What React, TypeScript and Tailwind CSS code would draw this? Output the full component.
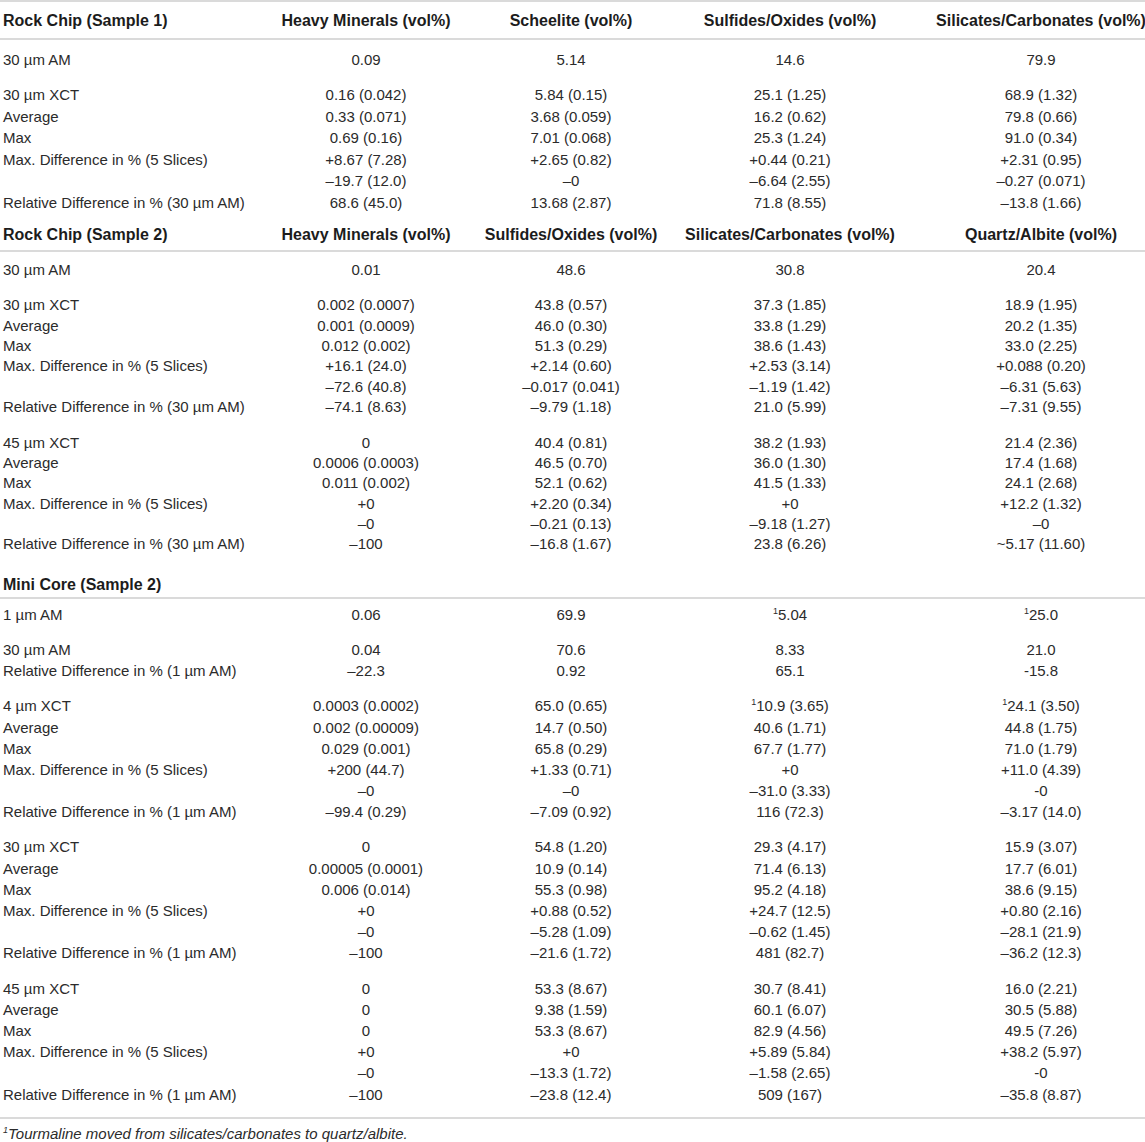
import type { ReactNode } from 'react';

type Row = [ReactNode, ReactNode, ReactNode, ReactNode, ReactNode];

interface Section {
  title: string;
  cols: string[] | null;
  headerClass: string;
  bodyClass: string;
  groupGap: string;
  rowClass: string;
  groups: Row[][];
}

const Sup = ({ children }: { children: ReactNode }) => (
  <span className="align-super text-[9px] leading-none">{children}</span>
);

const sections: Section[] = [
  {
    title: 'Rock Chip (Sample 1)',
    cols: ['Heavy Minerals (vol%)', 'Scheelite (vol%)', 'Sulfides/Oxides (vol%)', 'Silicates/Carbonates (vol%)'],
    headerClass: 'h-[40px] border-t-2 pt-[1px]',
    bodyClass: 'pt-[9px] pb-[6px]',
    groupGap: 'gap-[13.4px]',
    rowClass: 'h-[21.6px]',
    groups: [
      [['30 µm AM', '0.09', '5.14', '14.6', '79.9']],
      [
        ['30 µm XCT', '0.16 (0.042)', '5.84 (0.15)', '25.1 (1.25)', '68.9 (1.32)'],
        ['Average', '0.33 (0.071)', '3.68 (0.059)', '16.2 (0.62)', '79.8 (0.66)'],
        ['Max', '0.69 (0.16)', '7.01 (0.068)', '25.3 (1.24)', '91.0 (0.34)'],
        ['Max. Difference in % (5 Slices)', '+8.67 (7.28)', '+2.65 (0.82)', '+0.44 (0.21)', '+2.31 (0.95)'],
        ['', '–19.7 (12.0)', '–0', '–6.64 (2.55)', '–0.27 (0.071)'],
        ['Relative Difference in % (30 µm AM)', '68.6 (45.0)', '13.68 (2.87)', '71.8 (8.55)', '–13.8 (1.66)'],
      ],
    ],
  },
  {
    title: 'Rock Chip (Sample 2)',
    cols: ['Heavy Minerals (vol%)', 'Sulfides/Oxides (vol%)', 'Silicates/Carbonates (vol%)', 'Quartz/Albite (vol%)'],
    headerClass: 'h-[32px] pt-[1px]',
    bodyClass: 'pt-[7px] pb-[14px]',
    groupGap: 'gap-[15.5px]',
    rowClass: 'h-[20.3px]',
    groups: [
      [['30 µm AM', '0.01', '48.6', '30.8', '20.4']],
      [
        ['30 µm XCT', '0.002 (0.0007)', '43.8 (0.57)', '37.3 (1.85)', '18.9 (1.95)'],
        ['Average', '0.001 (0.0009)', '46.0 (0.30)', '33.8 (1.29)', '20.2 (1.35)'],
        ['Max', '0.012 (0.002)', '51.3 (0.29)', '38.6 (1.43)', '33.0 (2.25)'],
        ['Max. Difference in % (5 Slices)', '+16.1 (24.0)', '+2.14 (0.60)', '+2.53 (3.14)', '+0.088 (0.20)'],
        ['', '–72.6 (40.8)', '–0.017 (0.041)', '–1.19 (1.42)', '–6.31 (5.63)'],
        ['Relative Difference in % (30 µm AM)', '–74.1 (8.63)', '–9.79 (1.18)', '21.0 (5.99)', '–7.31 (9.55)'],
      ],
      [
        ['45 µm XCT', '0', '40.4 (0.81)', '38.2 (1.93)', '21.4 (2.36)'],
        ['Average', '0.0006 (0.0003)', '46.5 (0.70)', '36.0 (1.30)', '17.4 (1.68)'],
        ['Max', '0.011 (0.002)', '52.1 (0.62)', '41.5 (1.33)', '24.1 (2.68)'],
        ['Max. Difference in % (5 Slices)', '+0', '+2.20 (0.34)', '+0', '+12.2 (1.32)'],
        ['', '–0', '–0.21 (0.13)', '–9.18 (1.27)', '–0'],
        ['Relative Difference in % (30 µm AM)', '–100', '–16.8 (1.67)', '23.8 (6.26)', '~5.17 (11.60)'],
      ],
    ],
  },
  {
    title: 'Mini Core (Sample 2)',
    cols: null,
    headerClass: 'h-[32px] pt-[6px]',
    bodyClass: 'pt-[4.4px] pb-[12.4px]',
    groupGap: 'gap-[14px]',
    rowClass: 'h-[21.2px]',
    groups: [
      [['1 µm AM', '0.06', '69.9', <><Sup>1</Sup>5.04</>, <><Sup>1</Sup>25.0</>]],
      [
        ['30 µm AM', '0.04', '70.6', '8.33', '21.0'],
        ['Relative Difference in % (1 µm AM)', '–22.3', '0.92', '65.1', '-15.8'],
      ],
      [
        ['4 µm XCT', '0.0003 (0.0002)', '65.0 (0.65)', <><Sup>1</Sup>10.9 (3.65)</>, <><Sup>1</Sup>24.1 (3.50)</>],
        ['Average', '0.002 (0.00009)', '14.7 (0.50)', '40.6 (1.71)', '44.8 (1.75)'],
        ['Max', '0.029 (0.001)', '65.8 (0.29)', '67.7 (1.77)', '71.0 (1.79)'],
        ['Max. Difference in % (5 Slices)', '+200 (44.7)', '+1.33 (0.71)', '+0', '+11.0 (4.39)'],
        ['', '–0', '–0', '–31.0 (3.33)', '-0'],
        ['Relative Difference in % (1 µm AM)', '–99.4 (0.29)', '–7.09 (0.92)', '116 (72.3)', '–3.17 (14.0)'],
      ],
      [
        ['30 µm XCT', '0', '54.8 (1.20)', '29.3 (4.17)', '15.9 (3.07)'],
        ['Average', '0.00005 (0.0001)', '10.9 (0.14)', '71.4 (6.13)', '17.7 (6.01)'],
        ['Max', '0.006 (0.014)', '55.3 (0.98)', '95.2 (4.18)', '38.6 (9.15)'],
        ['Max. Difference in % (5 Slices)', '+0', '+0.88 (0.52)', '+24.7 (12.5)', '+0.80 (2.16)'],
        ['', '–0', '–5.28 (1.09)', '–0.62 (1.45)', '–28.1 (21.9)'],
        ['Relative Difference in % (1 µm AM)', '–100', '–21.6 (1.72)', '481 (82.7)', '–36.2 (12.3)'],
      ],
      [
        ['45 µm XCT', '0', '53.3 (8.67)', '30.7 (8.41)', '16.0 (2.21)'],
        ['Average', '0', '9.38 (1.59)', '60.1 (6.07)', '30.5 (5.88)'],
        ['Max', '0', '53.3 (8.67)', '82.9 (4.56)', '49.5 (7.26)'],
        ['Max. Difference in % (5 Slices)', '+0', '+0', '+5.89 (5.84)', '+38.2 (5.97)'],
        ['', '–0', '–13.3 (1.72)', '–1.58 (2.65)', '-0'],
        ['Relative Difference in % (1 µm AM)', '–100', '–23.8 (12.4)', '509 (167)', '–35.8 (8.87)'],
      ],
    ],
  },
];

// label column, then four value columns (last one nudged right)
const grid = 'grid grid-cols-[263px_206px_204px_234px_238px]';
const cellAlign = ['pl-[3px] justify-start', 'justify-center', 'justify-center', 'justify-center', 'justify-center pl-[30px]'];

export default function App() {
  return (
    <div className="w-[1145px] bg-white font-['Liberation_Sans',Arial,sans-serif] text-[15px] text-[#2b2b2b]">
      {sections.map((s) => (
        <div key={s.title}>
          <div className={`${grid} ${s.headerClass} items-center border-b-2 border-[#dadada] text-[16px] font-bold text-[#1c1c1c]`}>
            <div className={`flex whitespace-nowrap ${cellAlign[0]}`}>{s.title}</div>
            {s.cols?.map((c, i) => (
              <div key={c} className={`flex whitespace-nowrap ${cellAlign[i + 1]}`}>
                {c}
              </div>
            ))}
          </div>
          <div className={`flex flex-col ${s.groupGap} ${s.bodyClass}`}>
            {s.groups.map((g, gi) => (
              <div key={gi}>
                {g.map((r, ri) => (
                  <div key={ri} className={`${grid} ${s.rowClass} items-center`}>
                    {r.map((v, ci) => (
                      <div key={ci} className={`flex whitespace-nowrap ${cellAlign[ci]}`}>
                        <span>{v}</span>
                      </div>
                    ))}
                  </div>
                ))}
              </div>
            ))}
          </div>
        </div>
      ))}
      <div className="border-t-2 border-[#dadada] pl-[3px] pt-[4px] italic">
        <Sup>1</Sup>Tourmaline moved from silicates/carbonates to quartz/albite.
      </div>
    </div>
  );
}
